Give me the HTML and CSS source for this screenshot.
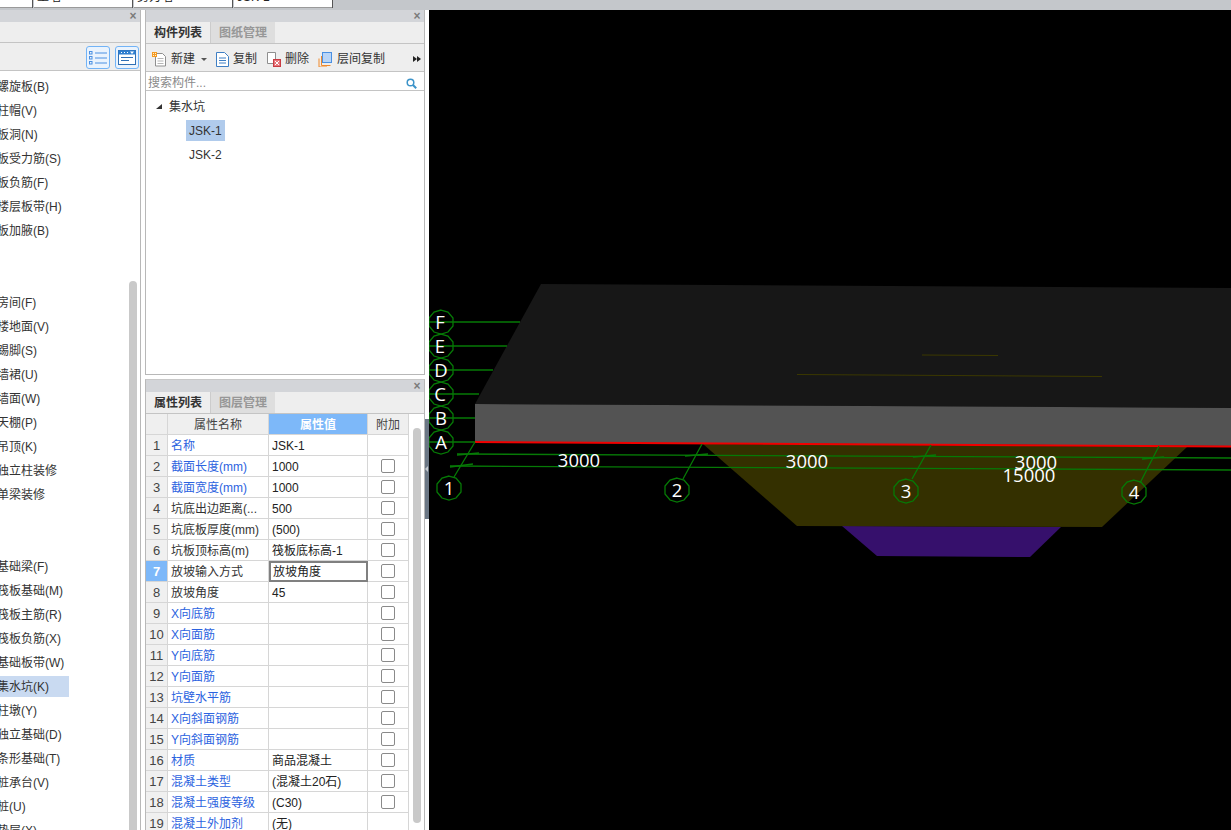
FILE: index.html
```html
<!DOCTYPE html>
<html lang="zh">
<head>
<meta charset="utf-8">
<title>集水坑</title>
<link rel="stylesheet" href="styles.css">
</head>
<body>
<div class="app">
  <div class="topstrip">
    <div class="doc-tab t0"></div>
    <div class="doc-tab"><span>土墙</span></div>
    <div class="doc-tab"><span>剪力墙</span></div>
    <div class="doc-tab"><span>JSK-1</span></div>
  </div>
  <div class="main">
    <aside class="left">
      <div class="titlebar"><span class="close">×</span></div>
      <div class="left-tabs"></div>
      <div class="left-tools">
        <button class="view-btn"><svg width="18" height="14" viewBox="0 0 18 14"><g fill="none" stroke="#4a90e2"><rect x="0.5" y="0.5" width="2.5" height="2.5"/><rect x="0.5" y="5.5" width="2.5" height="2.5"/><rect x="0.5" y="10.5" width="2.5" height="2.5"/><path d="M6 2h12M6 7h12M6 12h12"/></g></svg></button>
        <button class="view-btn"><svg width="18" height="15" viewBox="0 0 18 15"><rect x="0.5" y="0.5" width="17" height="14" fill="#fff" stroke="#2f6fb5"/><rect x="0.5" y="0.5" width="17" height="4" fill="#2f7fd0"/><path d="M3 2.5h1M6 2.5h1M9 2.5h1" stroke="#fff"/><path d="M12 1.5h4l-2 2.5z" fill="#fff"/><path d="M3 7.5h12M3 10.5h8" stroke="#2f6fb5"/></svg></button>
      </div>
      <div class="left-body">
        <ul class="nav-list">
          <li>螺旋板(B)</li><li>柱帽(V)</li><li>板洞(N)</li><li>板受力筋(S)</li><li>板负筋(F)</li><li>楼层板带(H)</li><li>板加腋(B)</li>
          <li></li><li></li>
          <li>房间(F)</li><li>楼地面(V)</li><li>踢脚(S)</li><li>墙裙(U)</li><li>墙面(W)</li><li>天棚(P)</li><li>吊顶(K)</li><li>独立柱装修</li><li>单梁装修</li>
          <li></li><li></li>
          <li>基础梁(F)</li><li>筏板基础(M)</li><li>筏板主筋(R)</li><li>筏板负筋(X)</li><li>基础板带(W)</li><li class="sel">集水坑(K)</li><li>柱墩(Y)</li><li>独立基础(D)</li><li>条形基础(T)</li><li>桩承台(V)</li><li>桩(U)</li><li>垫层(X)</li>
        </ul>
        <div class="scroll-track left-scroll"></div>
      </div>
    </aside>

    <div class="mid">
      <section class="panel panel-top">
        <div class="titlebar"><span class="close">×</span></div>
        <div class="tabs"><span class="tab on">构件列表</span><span class="tab">图纸管理</span></div>
        <div class="tools">
          <svg class="ic-new" width="15" height="15" viewBox="0 0 15 15"><path d="M3.5 1.5h7l3 3v9.5h-10z" fill="#fff" stroke="#8f8f8f"/><path d="M5.5 6.5h6M5.5 9h6M5.5 11.5h6" stroke="#b5b5b5"/><rect x="0" y="0" width="5" height="5" fill="#f59a23"/><path d="M1 1h1v1H1zM3 3h1v1H3zM3 1h1v1H3zM1 3h1v1H1z" fill="#fff3d0"/></svg>
          <span class="tool-label lbl-new">新建</span>
          <span class="caret"></span>
          <svg class="ic-copy" width="13" height="15" viewBox="0 0 13 15"><path d="M0.5 0.5h8l4 4v10h-12z" fill="#fff" stroke="#3f7fc4"/><path d="M3 6h7M3 8.5h7M3 11h7" stroke="#3f7fc4"/></svg>
          <span class="tool-label lbl-copy">复制</span>
          <svg class="ic-del" width="14" height="15" viewBox="0 0 14 15"><path d="M0.5 0.5h8v11h-8z" fill="#fff" stroke="#8f8f8f"/><rect x="6.5" y="7.5" width="7" height="7" fill="#e7757a" stroke="#c93b42"/><path d="M8 9l4 4M12 9l-4 4" stroke="#fff"/></svg>
          <span class="tool-label lbl-del">删除</span>
          <svg class="ic-layer" width="14" height="15" viewBox="0 0 14 15"><path d="M3.5 4v9.500h9M1 6.500v8.500h8" fill="none" stroke="#f08a2c"/><rect x="4.500" y="0.500" width="9" height="10" fill="#b9d5f7" stroke="#4a90e2"/></svg>
          <span class="tool-label lbl-layer">层间复制</span>
          <span class="more"><i></i><i></i></span>
        </div>
        <div class="search"><span>搜索构件...</span><svg width="11" height="11" viewBox="0 0 11 11"><circle cx="4.500" cy="4.500" r="3.300" fill="none" stroke="#3d94c9" stroke-width="1.500"/><path d="M7 7l3.200 3.200" stroke="#3d94c9" stroke-width="2"/></svg></div>
        <div class="tree">
          <div class="tree-root"><span class="tree-arrow"></span>集水坑</div>
          <div class="tree-leaf sel">JSK-1</div>
          <div class="tree-leaf">JSK-2</div>
        </div>
      </section>

      <section class="panel panel-bottom">
        <div class="titlebar"><span class="close">×</span></div>
        <div class="tabs"><span class="tab on">属性列表</span><span class="tab">图层管理</span></div>
        <div class="grid-wrap">
          <table class="props">
            <colgroup><col class="c-i"><col class="c-n"><col class="c-v"><col class="c-a"></colgroup>
            <thead><tr><th></th><th>属性名称</th><th class="hot">属性值</th><th>附加</th></tr></thead>
            <tbody>
              <tr><td class="i">1</td><td class="n link">名称</td><td class="v">JSK-1</td><td></td></tr>
              <tr><td class="i">2</td><td class="n link">截面长度(mm)</td><td class="v">1000</td><td class="a"><span class="cb"></span></td></tr>
              <tr><td class="i">3</td><td class="n link">截面宽度(mm)</td><td class="v">1000</td><td class="a"><span class="cb"></span></td></tr>
              <tr><td class="i">4</td><td class="n">坑底出边距离(...</td><td class="v">500</td><td class="a"><span class="cb"></span></td></tr>
              <tr><td class="i">5</td><td class="n">坑底板厚度(mm)</td><td class="v">(500)</td><td class="a"><span class="cb"></span></td></tr>
              <tr><td class="i">6</td><td class="n">坑板顶标高(m)</td><td class="v">筏板底标高-1</td><td class="a"><span class="cb"></span></td></tr>
              <tr><td class="i cur">7</td><td class="n">放坡输入方式</td><td class="v edit">放坡角度</td><td class="a"><span class="cb"></span></td></tr>
              <tr><td class="i">8</td><td class="n">放坡角度</td><td class="v">45</td><td class="a"><span class="cb"></span></td></tr>
              <tr><td class="i">9</td><td class="n link">X向底筋</td><td class="v"></td><td class="a"><span class="cb"></span></td></tr>
              <tr><td class="i">10</td><td class="n link">X向面筋</td><td class="v"></td><td class="a"><span class="cb"></span></td></tr>
              <tr><td class="i">11</td><td class="n link">Y向底筋</td><td class="v"></td><td class="a"><span class="cb"></span></td></tr>
              <tr><td class="i">12</td><td class="n link">Y向面筋</td><td class="v"></td><td class="a"><span class="cb"></span></td></tr>
              <tr><td class="i">13</td><td class="n link">坑壁水平筋</td><td class="v"></td><td class="a"><span class="cb"></span></td></tr>
              <tr><td class="i">14</td><td class="n link">X向斜面钢筋</td><td class="v"></td><td class="a"><span class="cb"></span></td></tr>
              <tr><td class="i">15</td><td class="n link">Y向斜面钢筋</td><td class="v"></td><td class="a"><span class="cb"></span></td></tr>
              <tr><td class="i">16</td><td class="n link">材质</td><td class="v">商品混凝土</td><td class="a"><span class="cb"></span></td></tr>
              <tr><td class="i">17</td><td class="n link">混凝土类型</td><td class="v">(混凝土20石)</td><td class="a"><span class="cb"></span></td></tr>
              <tr><td class="i">18</td><td class="n link">混凝土强度等级</td><td class="v">(C30)</td><td class="a"><span class="cb"></span></td></tr>
              <tr><td class="i">19</td><td class="n link">混凝土外加剂</td><td class="v">(无)</td><td></td></tr>
            </tbody>
          </table>
          <div class="scroll-track grid-scroll"></div>
        </div>
      </section>
    </div>

    <div class="splitter"><div class="grip"><span class="grip-arrow"></span></div></div>

    <div class="canvas">
      <svg class="scene" width="802" height="820" viewBox="429 10 802 820">
        <rect x="429" y="10" width="802" height="820" fill="#000"/>
        <polygon points="541,284 1231,288 1231,408 475,404" fill="#171717"/>
        <polygon points="475,404 1231,408 1231,446 475,442" fill="#535353"/>
        <polygon points="842,526 1061,527 1030,557 877,556" fill="#36106c"/>
        <polygon points="703,444 1187,447 1102,527 797,526" fill="#343000"/>
        <path d="M797 374.500L1102 376.500M922 355L998 355.500" stroke="#3b3800" stroke-width="1" fill="none"/>
        <path d="M475 442L1231 446.500" stroke="#f00000" stroke-width="2" fill="none"/>
        <g class="axis">
          <path d="M429 322H520M429 346H507M429 370H493M429 394H479M429 418H475M429 442H475"/>
          <path d="M457 454L1231 458M450 466L1231 470"/>
          <path d="M457 455L479 453M685 456L708 454M913 457L936 455M1142 459L1164 457M450 467L473 464"/>
          <path d="M454 477L475 442M683 479L702 444M912 479L931 445M1140 483L1159 446"/>
          <polygon points="441,310 448,312 453,318 453,326 448,332 441,334 434,332 429,326 429,318 434,312"/>
          <polygon points="441,334 448,336 453,342 453,350 448,356 441,358 434,356 429,350 429,342 434,336"/>
          <polygon points="441,358 448,360 453,366 453,374 448,380 441,382 434,380 429,374 429,366 434,360"/>
          <polygon points="441,382 448,384 453,390 453,398 448,404 441,406 434,404 429,398 429,390 434,384"/>
          <polygon points="441,406 448,408 453,414 453,422 448,428 441,430 434,428 429,422 429,414 434,408"/>
          <polygon points="441,430 448,432 453,438 453,446 448,452 441,454 434,452 429,446 429,438 434,432"/>
          <polygon points="449,476 456,478 461,484 461,492 456,498 449,500 442,498 437,492 437,484 442,478"/>
          <polygon points="677,478 684,480 689,486 689,494 684,500 677,502 670,500 665,494 665,486 670,480"/>
          <polygon points="906,479 913,481 918,487 918,495 913,501 906,503 899,501 894,495 894,487 899,481"/>
          <polygon points="1134,480 1141,482 1146,488 1146,496 1141,502 1134,504 1127,502 1122,496 1122,488 1127,482"/>
        </g>
        <g class="labels">
          <text x="440" y="329">F</text><text x="440" y="353">E</text><text x="441" y="377">D</text><text x="440" y="401">C</text><text x="441" y="425">B</text><text x="441" y="449">A</text>
          <text x="449" y="495">1</text><text x="677" y="497">2</text><text x="906" y="498">3</text><text x="1134" y="499">4</text>
          <text x="579" y="467">3000</text><text x="807" y="468">3000</text><text x="1036" y="469">3000</text><text x="1029" y="482">15000</text>
        </g>
      </svg>
    </div>
  </div>
</div>
</body>
</html>
```

FILE: styles.css
```css
* { box-sizing: border-box; }
html, body { margin: 0; padding: 0; background: #fff; overflow: hidden; }
body { font: 12px/1 "Liberation Sans", "Noto Sans CJK SC", sans-serif; color: #222; }
.app { width: 1231px; height: 830px; display: flex; flex-direction: column; overflow: hidden; }

.topstrip { height: 10px; flex: none; background: #c4c7cb; display: flex; gap: 2px; align-items: flex-start; overflow: hidden; }
.doc-tab { width: 98px; height: 8px; background: #fff; border-bottom: 1px solid #9a9a9a; box-shadow: 1px 0 0 #555; overflow: hidden; font-size: 12px; }
.doc-tab.t0 { width: 32px; }
.doc-tab span { display: block; margin: -10px 0 0 3px; line-height: 14px; color: #222; }

.main { flex: 1; min-height: 0; display: flex; }

.left { width: 141px; flex: none; border-right: 1px solid #b8b8b8; display: flex; flex-direction: column; overflow: hidden; }
.titlebar { height: 12px; flex: none; background: #d3d5d9; display: flex; justify-content: flex-end; align-items: center; padding-right: 2px; }
.close { color: #7b7b7b; font: bold 12px/12px "Liberation Sans", sans-serif; width: 10px; text-align: center; }
.left-tabs { height: 21px; flex: none; background: #eee; border-bottom: 1px solid #c4c4c4; }
.left-tools { height: 28px; flex: none; background: #eee; border-bottom: 1px solid #c4c4c4; display: flex; justify-content: flex-end; gap: 5px; padding: 3px 1px 0 0; }
.view-btn { width: 24px; height: 23px; padding: 0; background: #eaf3fd; border: 1px solid #72b3f6; border-radius: 3px; display: flex; align-items: center; justify-content: center; }
.left-body { flex: 1; min-height: 0; display: flex; overflow: hidden; }
.nav-list { list-style: none; margin: 0; padding: 5px 0 0; flex: 1; min-width: 0; }
.nav-list li { width: 69px; height: 21px; margin-bottom: 3px; line-height: 23px; white-space: nowrap; text-indent: -3px; color: #333; }
.nav-list li.sel { background: #c9daf1; }
.scroll-track { width: 8px; flex: none; background: #c9c9c9; border-radius: 4px 4px 0 0; }
.left-scroll { margin: 210px 3px 0 0; }

.mid { width: 280px; flex: none; margin-left: 4px; display: flex; flex-direction: column; gap: 4px; }
.panel { border: 1px solid #b8b8b8; border-top: 0; display: flex; flex-direction: column; overflow: hidden; }
.panel-top { height: 365px; flex: none; }
.panel-bottom { flex: 1; min-height: 0; border-top: 1px solid #c8c8c8; border-bottom: 0; }
.tabs { height: 22px; flex: none; background: #eee; border-bottom: 1px solid #c4c4c4; display: flex; }
.tab { width: 65px; height: 21px; background: #dedede; color: #979797; font-weight: 700; line-height: 21px; text-align: center; border-left: 1px solid #ccc; padding-top: 1px; }
.tab.on { background: #eee; color: #333; width: 64px; border-left: 0; }

.tools { height: 28px; flex: none; background: #eee; border-bottom: 1px solid #c4c4c4; display: flex; align-items: center; color: #333; padding-top: 3px; }
.tools svg { flex: none; }
.ic-new { margin-left: 6px; }
.lbl-new { margin-left: 4px; }
.caret { width: 0; height: 0; border: 3px solid transparent; border-top: 3px solid #555; border-bottom: 0; margin-left: 6px; }
.ic-copy { margin-left: 9px; }
.lbl-copy { margin-left: 4px; }
.ic-del { margin-left: 10px; }
.lbl-del { margin-left: 4px; }
.ic-layer { margin-left: 9px; }
.lbl-layer { margin-left: 5px; }
.more { margin-left: auto; margin-right: 3px; display: flex; }
.more i { width: 0; height: 0; border: 3.500px solid transparent; border-left: 4px solid #222; border-right: 0; }

.search { height: 19px; flex: none; border-bottom: 1px solid #c4c4c4; display: flex; align-items: center; justify-content: space-between; padding: 4px 7px 0 2px; color: #8a8a8a; background: #fff; }
.tree { flex: 1; background: #fff; padding-top: 3px; color: #333; }
.tree-root { height: 26px; line-height: 26px; padding-left: 23px; position: relative; }
.tree-arrow { position: absolute; left: 10px; top: 10px; width: 0; height: 0; border-style: solid; border-width: 0 0 5px 6px; border-color: transparent transparent #333 transparent; }
.tree-leaf { width: 39px; height: 21px; margin: 0 0 3px 40px; padding-left: 3px; line-height: 23px; white-space: nowrap; }
.tree-leaf.sel { background: #b0cbec; }

.grid-wrap { flex: 1; min-height: 0; display: flex; overflow: hidden; align-items: flex-start; }
.props { width: 263px; flex: none; table-layout: fixed; border-collapse: separate; border-spacing: 0; }
.c-i { width: 22px; }
.c-n { width: 101px; }
.c-v { width: 99px; }
.c-a { width: 41px; }
.props th, .props td { height: 21px; padding: 0; border-right: 1px solid #d6d6d6; border-bottom: 1px solid #d6d6d6; font-weight: 400; white-space: nowrap; overflow: hidden; }
.props th { background: #efefef; color: #444; text-align: center; padding-top: 1px; }
.props th.hot { background: #7db8f9; color: #fff; font-weight: 700; }
.props td.i { background: #f0f0f0; text-align: center; color: #444; font-size: 13px; padding-top: 1px; }
.props td.i.cur { background: #7db8f9; color: #fff; font-weight: 700; }
.props td.n { padding: 1px 0 0 3px; color: #333; }
.props td.link { color: #2c63e0; }
.props td.v { padding: 1px 0 0 3px; color: #222; }
.props td.edit { border: 2px solid #808080; padding: 0 0 0 2px; }
.props td.a { text-align: center; }
.cb { display: block; width: 14px; height: 14px; margin: 0 auto; border: 1px solid #8a8a8a; border-radius: 2px; background: #fff; }
.grid-scroll { width: 8px; height: 395px; margin: 14px 0 0 4px; border-radius: 4px; }

.splitter { width: 4px; flex: none; background: #fff; padding-top: 409px; }
.grip { height: 100px; background: #6b7785; display: flex; align-items: center; }
.grip-arrow { width: 0; height: 0; border: 3px solid transparent; border-right: 3px solid #c5cad0; border-left: 0; }

.canvas { flex: 1; min-width: 0; background: #000; overflow: hidden; }
.scene { display: block; }
.axis path, .axis polygon { fill: none; stroke: #067a06; stroke-width: 1.300; }
.labels text { fill: #fff; font: 400 18.500px "Open Sans", sans-serif; text-anchor: middle; }
```
